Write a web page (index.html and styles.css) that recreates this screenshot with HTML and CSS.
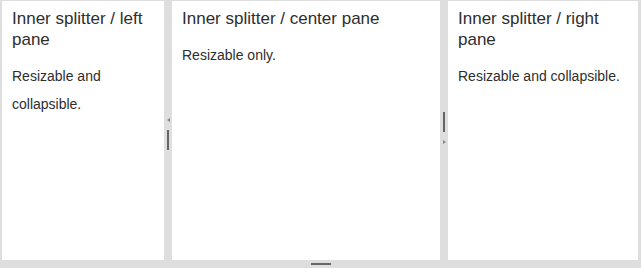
FILE: index.html
```html
<!DOCTYPE html>
<html>
<head>
<meta charset="utf-8">
<link rel="stylesheet" href="styles.css">
</head>
<body>
<div class="splitter">
  <div class="row">
    <div class="pane left">
      <h3 class="title">Inner splitter / left pane</h3>
      <p class="text">Resizable and collapsible.</p>
    </div>
    <div class="vbar">
      <span class="arrow-left"></span>
      <span class="vhandle"></span>
    </div>
    <div class="pane center">
      <h3 class="title">Inner splitter / center pane</h3>
      <p class="text">Resizable only.</p>
    </div>
    <div class="vbar second">
      <span class="vhandle"></span>
      <span class="arrow-right"></span>
    </div>
    <div class="pane right">
      <h3 class="title">Inner splitter / right pane</h3>
      <p class="text">Resizable and collapsible.</p>
    </div>
  </div>
  <div class="hbar"><span class="hhandle"></span></div>
</div>
</body>
</html>
```
FILE: styles.css
```css
html, body {
  margin: 0;
  padding: 0;
}
body {
  width: 641px;
  height: 268px;
  overflow: hidden;
  font-family: "Liberation Sans", Arial, sans-serif;
  color: #2e2e2e;
}
.splitter {
  width: 641px;
  height: 268px;
  box-sizing: border-box;
  background: #dedede;
  padding: 1px 3px 0 2px;
  display: flex;
  flex-direction: column;
}
.row {
  flex: 1;
  display: flex;
  min-height: 0;
}
.pane {
  background: #fff;
  box-sizing: border-box;
  padding: 7px 10px 0 10px;
}
.left { width: 162px; }
.center { width: 268px; }
.right { flex: 1; }
.title {
  margin: 0;
  font-size: 17px;
  font-weight: normal;
  line-height: 21px;
}
.text {
  margin: 12px 0 0 0;
  font-size: 14px;
  line-height: 28px;
}
.vbar {
  width: 8px;
  display: flex;
  flex-direction: column;
  align-items: center;
  justify-content: center;
  gap: 8px;
}
.vbar .vhandle {
  width: 2px;
  height: 20px;
  background: #666;
}
.vbar:not(.second) { padding-top: 6px; }
.vbar.second { padding-bottom: 6px; }
.arrow-left {
  width: 0;
  height: 0;
  border-top: 2px solid transparent;
  border-bottom: 2px solid transparent;
  border-right: 3px solid #888;
}
.arrow-right {
  width: 0;
  height: 0;
  border-top: 2px solid transparent;
  border-bottom: 2px solid transparent;
  border-left: 3px solid #888;
}
.hbar {
  height: 8px;
  display: flex;
  align-items: center;
  justify-content: center;
  margin: 0 -3px 0 -2px;
}
.hhandle {
  width: 20px;
  height: 2px;
  background: #666;
}
```
